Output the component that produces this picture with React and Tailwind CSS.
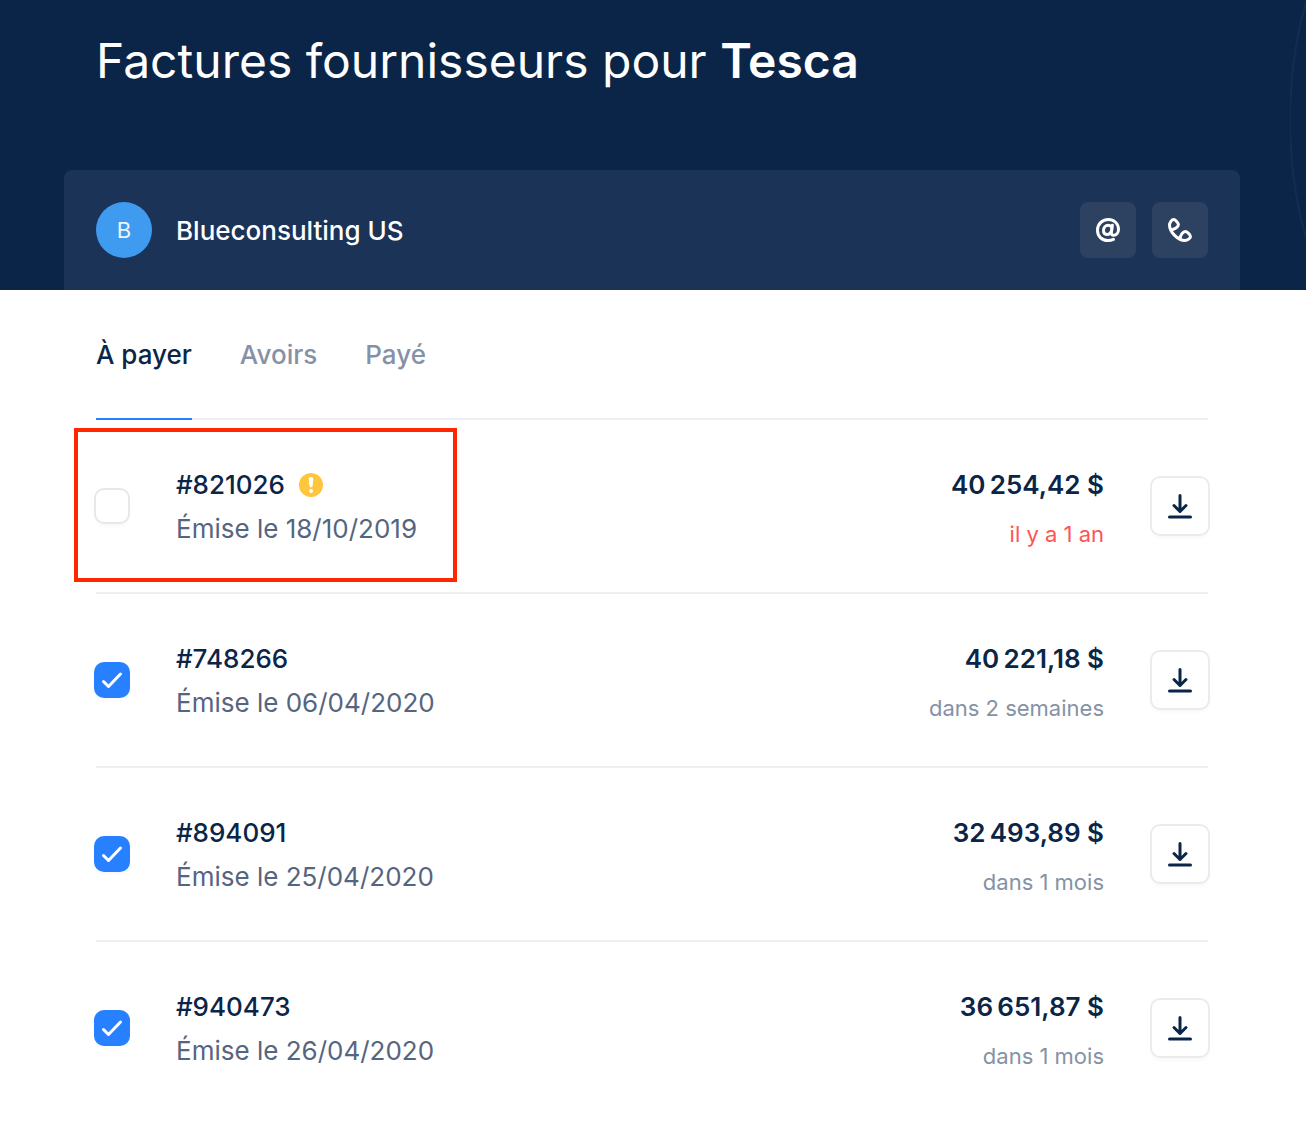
import React, { useState } from "react";

const invoices = [
  { number: "821026", date: "18/10/2019", amount: "40\u202f254,42\u00a0$", due: "il y a 1 an", late: true, warning: true, highlighted: true },
  { number: "748266", date: "06/04/2020", amount: "40\u202f221,18\u00a0$", due: "dans 2 semaines", selected: true },
  { number: "894091", date: "25/04/2020", amount: "32\u202f493,89\u00a0$", due: "dans 1 mois", selected: true },
  { number: "940473", date: "26/04/2020", amount: "36\u202f651,87\u00a0$", due: "dans 1 mois", selected: true },
];

const tabs = ["À payer", "Avoirs", "Payé"];

function AtIcon() {
  return (
    <svg className="size-6" viewBox="0 0 24 24" fill="none" stroke="currentColor" strokeWidth="3" strokeLinecap="round" strokeLinejoin="round" aria-hidden="true">
      <path d="M16.4 7.2 15.4 14.2c-.3 2.200.6 3 2.100 3 3 0 5-2.600 5-5.900C22.500 5.500 18 1.500 12.300 1.500 6 1.500 1.500 6.200 1.500 12.200c0 6 4.300 10.300 10.300 10.300 2.200 0 4-.4 5.700-1.200" />
      <path d="M15.800 11.200c.3-2.500-1.300-4-3.500-4-2.800 0-4.800 2.500-4.800 5.400 0 2.300 1.200 3.900 3.300 3.900 2.500 0 4.500-2 5-5.300Z" />
    </svg>
  );
}

function PhoneIcon() {
  return (
    <svg className="size-6" viewBox="0 0 24 24" fill="none" stroke="currentColor" strokeWidth="3" strokeLinecap="round" strokeLinejoin="round" aria-hidden="true">
      <path d="M3 11.800C6.500 11.800 10.400 8.800 10.400 6.800 10.400 5 7.300 1.500 5.600 1.500 3.900 1.500 1.500 4.500 1.500 7c0 7 8.500 15.500 15.500 15.500 2.500 0 5.500-2.400 5.500-4.100 0-1.700-3.500-4.900-5.300-4.900-2 0-5 3.500-5 7" />
    </svg>
  );
}

function DownloadIcon() {
  return (
    <svg className="size-7" viewBox="0 0 28 28" fill="none" stroke="currentColor" strokeWidth="3" strokeLinecap="round" strokeLinejoin="round" aria-hidden="true">
      <path d="M14 3.500v16M8 13.500l6 6 6-6M3.500 25h21" />
    </svg>
  );
}

function WarningIcon() {
  return (
    <svg className="size-6" viewBox="0 0 24 24" role="img" aria-label="Attention">
      <circle cx="12" cy="12" r="12" fill="#ffc53d" />
      <path d="M9.700 5.700C9.700 4.500 10.700 4 12 4s2.300.5 2.300 1.700l-.7 7c-.1 1-.7 1.500-1.600 1.500s-1.500-.5-1.600-1.500Z" fill="#fff" />
      <circle cx="12" cy="18" r="2" fill="#fff" />
    </svg>
  );
}

function InvoiceRow({ invoice }) {
  const [checked, setChecked] = useState(Boolean(invoice.selected));
  const id = `invoice-${invoice.number}`;
  return (
    <li className="relative flex items-center border-b-2 border-[#eeeff5] py-[41px] last:border-transparent">
      <span className="mr-12 grid size-8 shrink-0">
        <input
          id={id}
          type="checkbox"
          checked={checked}
          onChange={(e) => setChecked(e.target.checked)}
          className="peer col-start-1 row-start-1 size-8 appearance-none rounded-lg bg-white shadow-[0_0_0_2px_#e6e8ed,0_4px_4px_#0a254708] checked:bg-[#2680ff] checked:shadow-[0_0_0_2px_#2680ff,0_4px_4px_#0a254708]"
        />
        <svg className="pointer-events-none invisible col-start-1 row-start-1 size-8 peer-checked:visible" viewBox="0 0 32 32" fill="none" stroke="#fff" strokeWidth="3" strokeLinecap="round" strokeLinejoin="round" aria-hidden="true">
          <path d="m7.500 17.500 5 5 12-12.500" />
        </svg>
      </span>
      <div className="flex-1 pt-0.5 leading-11">
        <label htmlFor={id} className="flex items-center gap-3.5 font-medium">
          #{invoice.number}
          {invoice.warning && <WarningIcon />}
        </label>
        <p className="text-[#56657f]">Émise le {invoice.date}</p>
      </div>
      <div className="mr-12 pt-0.5 text-right">
        <p className="leading-11 font-semibold">{invoice.amount}</p>
        <p className={invoice.late ? "pt-3 pb-0.5 text-[22px] leading-[30px] text-[#ff5454]" : "pt-3 pb-0.5 text-[22px] leading-[30px] text-[#8592a6]"}>{invoice.due}</p>
      </div>
      <button type="button" aria-label={`Télécharger la facture ${invoice.number}`} className="grid size-14 shrink-0 place-items-center rounded-lg bg-white shadow-[0_0_0_2px_#e9ebf0,0_4px_4px_#0a254708]">
        <DownloadIcon />
      </button>
      {invoice.highlighted && <span className="pointer-events-none absolute top-2 -left-[22px] h-[154px] w-[383px] border-4 border-[#ff2600]" />}
    </li>
  );
}

export default function App() {
  const [active, setActive] = useState(tabs[0]);
  return (
    <div className="min-h-screen bg-white font-['Inter',sans-serif] text-[26px] text-[#0a2547]">
      <header className="relative overflow-hidden bg-[#0a2547] pr-[66px] pl-16 text-white">
        <svg className="pointer-events-none absolute top-0 right-0 h-full w-4" viewBox="0 0 16 290" fill="none" aria-hidden="true">
          <circle cx="443" cy="120" r="443" stroke="#fff" strokeOpacity="0.04" strokeWidth="2" />
        </svg>
        <h1 className="px-8 pt-8 pb-20 text-5xl leading-[58px] font-normal [font-optical-sizing:none]">
          Factures fournisseurs pour <strong className="font-semibold">Tesca</strong>
        </h1>
        <section className="flex items-center rounded-t-lg bg-[#1b3357] p-8">
          <span className="grid size-14 place-items-center rounded-full bg-[#3e9bf0] text-[22px] text-white/90">B</span>
          <h2 className="ml-6 flex-1 font-medium">Blueconsulting US</h2>
          <div className="flex gap-4">
            <button type="button" aria-label="Envoyer un e-mail" className="grid size-14 place-items-center rounded-lg bg-[#2d4160]">
              <AtIcon />
            </button>
            <button type="button" aria-label="Appeler" className="grid size-14 place-items-center rounded-lg bg-[#2d4160]">
              <PhoneIcon />
            </button>
          </div>
        </section>
      </header>
      <main className="pr-[98px] pl-24">
        <nav className="flex gap-12 border-b-2 border-[#eeeff5]">
          {tabs.map((tab) => (
            <button
              key={tab}
              type="button"
              onClick={() => setActive(tab)}
              className={
                tab === active
                  ? "-mb-0.5 border-b-2 border-[#2680ff] pt-[45px] pb-[43px] leading-10 font-medium"
                  : "-mb-0.5 border-b-2 border-transparent pt-[45px] pb-[43px] leading-10 font-medium text-[#8592a6]"
              }
            >
              {tab}
            </button>
          ))}
        </nav>
        <ul>
          {invoices.map((invoice) => (
            <InvoiceRow key={invoice.number} invoice={invoice} />
          ))}
        </ul>
      </main>
    </div>
  );
}
